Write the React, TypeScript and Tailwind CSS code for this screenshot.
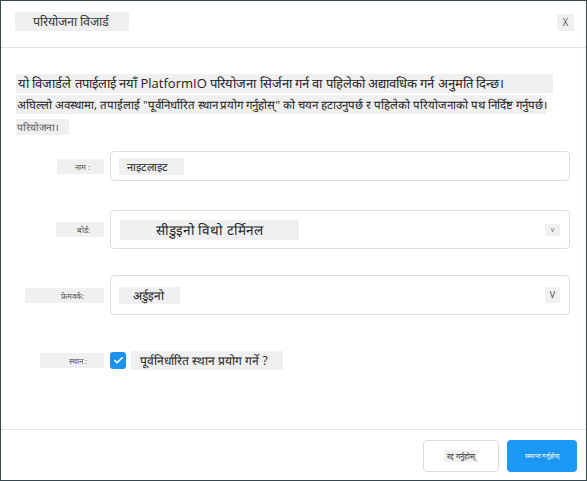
import { Check } from "lucide-react"

const FONT = { fontFamily: '"Open Sans", serif' }

function FieldLabel({ text, className = "" }: { text: string; className?: string }) {
  return (
    <div className="flex justify-end pr-[6px]">
      <span className={`bg-[#f0f0f0] text-[8px] text-[#555] leading-[15px] text-right ${className}`}>{text}</span>
    </div>
  )
}

export default function App() {
  return (
    <div style={FONT} className="w-[587px] h-[481px] bg-white border border-[#37474f] flex flex-col text-[#222] overflow-hidden">
      {/* header */}
      <div className="h-[47px] shrink-0 border-b border-[#e4e4e4] flex items-start justify-between pl-[14px] pr-[12px] pt-[11px]">
        <div className="bg-[#f0f0f0] h-[19px] w-[114px] pl-[18px] text-[12.5px] leading-[19px] text-[#333]">परियोजना विजार्ड</div>
        <div className="bg-[#f0f0f0] h-[17px] w-[17px] mt-[2px] flex items-center justify-center text-[10px] text-[#555]">X</div>
      </div>

      {/* body */}
      <div className="flex-1 flex flex-col px-[15px] pt-[26px]">
        <div className="bg-[#f0f0f0] w-[537px] h-[19px] px-[2px] text-[13px] leading-[19px] whitespace-nowrap">
          यो विजार्डले तपाईलाई नयाँ PlatformIO परियोजना सिर्जना गर्न वा पहिलेको अद्यावधिक गर्न अनुमति दिन्छ।
        </div>
        <div className="bg-[#f0f0f0] w-[530px] h-[19px] mt-[2px] px-[1px] text-[11.5px] leading-[19px] whitespace-nowrap">
          अघिल्लो अवस्थामा, तपाईलाई "पूर्वनिर्धारित स्थान प्रयोग गर्नुहोस्" को चयन हटाउनुपर्छ र पहिलेको परियोजनाको पथ निर्दिष्ट गर्नुपर्छ।
        </div>
        <div className="bg-[#f0f0f0] w-[53px] h-[16px] mt-[5px] px-[1px] text-[10px] leading-[16px] text-[#555] whitespace-nowrap">
          परियोजना।
        </div>

        {/* form */}
        <div className="grid grid-cols-[94px_460px] mt-[16px]">
          <div className="flex items-center h-[30px]">
            <div className="w-full"><FieldLabel text="नाम :" className="w-[47px] pr-[14px]" /></div>
          </div>
          <div className="h-[30px] border border-[#dcdcdc] rounded-[4px] flex items-center pl-[8px]">
            <span className="bg-[#f0f0f0] h-[17px] w-[65px] pl-[8px] text-[11px] leading-[17px]">नाइटलाइट</span>
          </div>

          <div className="h-[29px] col-span-2" />

          <div className="flex items-center h-[39px]">
            <div className="w-full"><FieldLabel text="बोर्ड:" className="w-[48px] pr-[14px]" /></div>
          </div>
          <div className="h-[39px] border border-[#dcdcdc] rounded-[4px] flex items-center justify-between pl-[9px] pr-[9px]">
            <span className="bg-[#f0f0f0] h-[20px] w-[179px] text-center text-[13.5px] leading-[20px]">सीडुइनो विथो टर्मिनल</span>
            <span className="bg-[#f0f0f0] h-[12px] w-[15px] text-center text-[7px] leading-[12px] text-[#666]">v</span>
          </div>

          <div className="h-[26px] col-span-2" />

          <div className="flex items-center h-[40px]">
            <div className="w-full"><FieldLabel text="फ्रेमवर्क:" className="w-[79px] pr-[20px]" /></div>
          </div>
          <div className="h-[40px] border border-[#dcdcdc] rounded-[4px] flex items-center justify-between pl-[8px] pr-[9px]">
            <span className="bg-[#f0f0f0] h-[17px] w-[61px] pl-[14px] text-[12px] leading-[17px]">अर्डुइनो</span>
            <span className="bg-[#f0f0f0] h-[16px] w-[15px] text-center text-[9px] leading-[16px] text-[#444]">V</span>
          </div>

          <div className="h-[36px] col-span-2" />

          <div className="flex items-center h-[19px]">
            <div className="w-full"><FieldLabel text="स्थान :" className="w-[64px] pr-[17px]" /></div>
          </div>
          <div className="h-[19px] flex items-center gap-[5px]">
            <span className="w-[16px] h-[17px] rounded-[3px] bg-[#1e90ee] flex items-center justify-center">
              <Check className="w-[11px] h-[11px] text-white" strokeWidth={3.5} />
            </span>
            <span className="bg-[#f0f0f0] h-[19px] w-[152px] pl-[9px] text-[12px] leading-[19px]">पूर्वनिर्धारित स्थान प्रयोग गर्ने ?</span>
          </div>
        </div>
      </div>

      {/* footer */}
      <div className="h-[51px] shrink-0 border-t border-[#e4e4e4] flex justify-end items-start gap-[8px] pt-[10px] pr-[9px]">
        <button className="w-[76px] h-[32px] rounded-[4px] border border-[#dcdcdc] bg-white flex items-center justify-center">
          <span className="bg-[#f0f0f0] h-[12px] px-[3px] text-[7.5px] leading-[12px] text-[#333]">रद्द गर्नुहोस्</span>
        </button>
        <button className="w-[70px] h-[32px] rounded-[4px] bg-[#1a9af5] flex items-center justify-center">
          <span className="bg-[#1b95f0] h-[12px] px-[3px] text-[6.5px] leading-[12px] text-white">समाप्त गर्नुहोस्</span>
        </button>
      </div>
    </div>
  )
}
